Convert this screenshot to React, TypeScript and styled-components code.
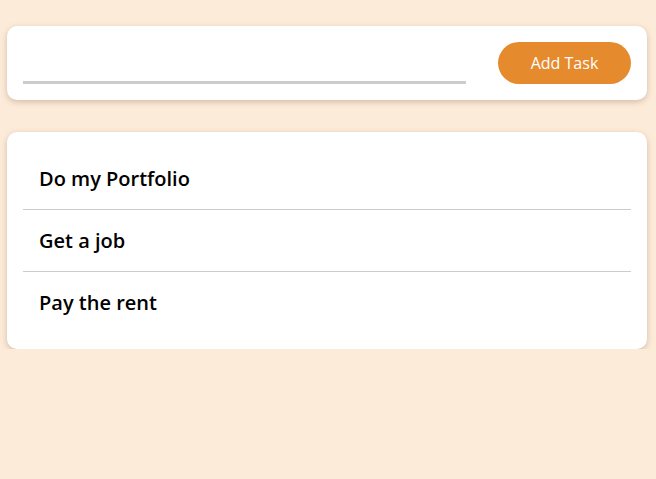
import React, { useState } from "react";
import styled, { createGlobalStyle } from "styled-components";

const GlobalStyle = createGlobalStyle`
  html, body {
    margin: 0;
    padding: 0;
    background: #fdebd9;
    font-family: "Open Sans", "Noto Sans", sans-serif;
  }
  * { box-sizing: border-box; }
`;

const Page = styled.div`
  width: 640px;
  margin-left: 7px;
  padding-top: 26px;
  display: flex;
  flex-direction: column;
  gap: 32px;
`;

const Card = styled.div`
  background: #ffffff;
  border-radius: 10px;
  box-shadow: 0 2px 6px rgba(120, 90, 60, 0.32);
  padding: 16px;
`;

const Form = styled.form`
  display: flex;
  align-items: center;
  gap: 32px;
`;

const Input = styled.input`
  flex: 1;
  height: 42px;
  border: none;
  border-bottom: 3px solid #cccccc;
  outline: none;
  font-family: inherit;
  font-size: 18px;
  background: transparent;
`;

const Button = styled.button`
  width: 133px;
  height: 42px;
  border: none;
  border-radius: 21px;
  background: #e68a2e;
  color: #ffffff;
  font-family: inherit;
  font-size: 16px;
  font-weight: 500;
  cursor: pointer;
`;

const List = styled.ul`
  list-style: none;
  margin: 0;
  padding: 0;
`;

const Item = styled.li`
  box-sizing: content-box;
  height: 61px;
  display: flex;
  align-items: center;
  padding: 0 16px;
  font-size: 20px;
  font-weight: 600;
  color: #000;
  & + & {
    border-top: 1px solid #cccccc;
  }
`;

export default function App() {
  const [text, setText] = useState("");
  const tasks = ["Do my Portfolio", "Get a job", "Pay the rent"];
  return (
    <>
      <GlobalStyle />
      <Page>
        <Card>
          <Form onSubmit={(e) => e.preventDefault()}>
            <Input value={text} onChange={(e) => setText(e.target.value)} />
            <Button type="submit">Add Task</Button>
          </Form>
        </Card>
        <Card>
          <List>
            {tasks.map((t) => (
              <Item key={t}>{t}</Item>
            ))}
          </List>
        </Card>
      </Page>
    </>
  );
}
